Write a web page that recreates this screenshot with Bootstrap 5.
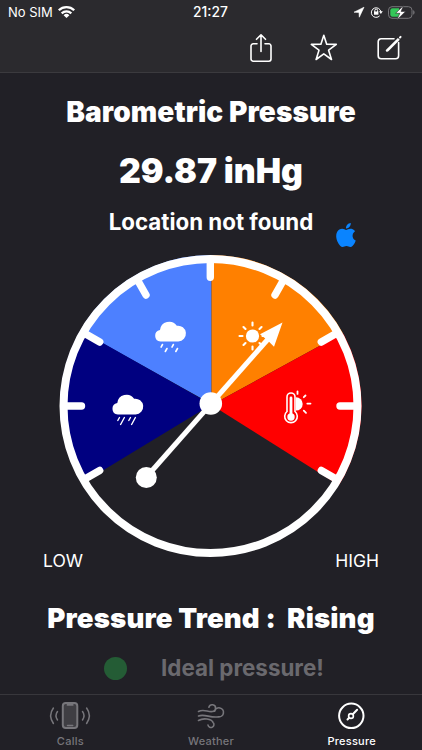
<!DOCTYPE html>
<html lang="en" data-bs-theme="dark">
<head>
<meta charset="utf-8">
<meta name="viewport" content="width=device-width, initial-scale=1">
<title>Barometric Pressure</title>
<link href="https://cdn.jsdelivr.net/npm/bootstrap@5.3.0/dist/css/bootstrap.min.css" rel="stylesheet">
<style>
body{background:#212026;color:#fff;font-family:Inter,"Liberation Sans",sans-serif;height:750px;overflow:hidden}
svg{display:block;flex:none;overflow:visible}
.topbar{height:73px;background:#2b2a2e;border-bottom:1px solid #3b3a3e}
.status{height:24px;padding:0 9px 0 8px;font-size:13px;line-height:24px}
.status>div{flex:1 1 0}
.clock{font-weight:500;font-size:13.8px;text-align:center}
.tools{height:48px;padding-right:20px;gap:35px}
.t{white-space:nowrap;text-align:center;margin:0;font-weight:900}
.t1{font-size:28px;line-height:40px;margin-top:19px;letter-spacing:.1px}
.t2{font-size:33.8px;line-height:44px;margin-top:17px}
.t3{font-size:22.3px;line-height:30px;font-weight:700}
.place{height:36px;margin-top:14px}
.apple{position:absolute;left:334px;top:16px}
.dial{height:310px}
.ends{font-size:17.5px;line-height:24px;padding:0 43px;margin-top:-4px}
.t4{font-size:27.6px;line-height:40px;margin-top:25px;letter-spacing:.13px}
.hint{margin-top:15px;height:30px;padding-left:104px;gap:34px}
.dot{width:23px;height:23px;border-radius:50%;background:#245c35}
.t5{font-size:22.4px;line-height:30px;color:#6a696e;font-weight:700}
.tabs{height:56px;border-top:1px solid #38373c;font-size:11px;font-weight:500;color:#77767b;letter-spacing:.25px}
.tabs a{color:inherit;text-decoration:none;line-height:14px}
.tabs a span{position:relative;top:1px}
.tabs .on{color:#fff}
</style>
</head>
<body class="d-flex flex-column">
<header class="topbar flex-shrink-0">
  <div class="status d-flex align-items-center">
    <div class="d-flex align-items-center"><span>No SIM</span>
      <svg class="ms-1" width="19" height="14" viewBox="0 0 19 14" fill="none" stroke="#fff" stroke-width="2.3"><path d="M1.8 5.3a11 11 0 0 1 15.4 0M4.700 8.300a7 7 0 0 1 9.600 0"/><path d="M9.500 13 6.600 10.200a4.100 4.100 0 0 1 5.800 0z" fill="#fff" stroke="none"/></svg>
    </div>
    <div class="clock">21:27</div>
    <div class="d-flex align-items-center justify-content-end">
      <svg width="62" height="16" viewBox="0 0 62 16" fill="none"><path d="M3 8.200 13 3.200 8.300 13.200 8 8.400z" fill="#fff" stroke="#fff" stroke-width=".6"/><g transform="translate(2 0)"><path d="M26.700 11.800a4.800 4.800 0 1 1 1.200-3.800" stroke="#fff"/><path d="M26 7.300h3.800l-1.900 2.600z" fill="#fff"/><path d="M21 7.500h4.400v3.200H21z" fill="#fff"/><path d="M21.800 8V6.500a1.400 1.400 0 0 1 2.800 0V8" stroke="#fff"/><rect x="35.500" y="2.700" width="23.500" height="11.600" rx="3.500" stroke="#77767a"/><path d="M39.500 4.200H46v8.600h-6.500a2.200 2.200 0 0 1-2.200-2.200V6.400a2.200 2.200 0 0 1 2.200-2.200z" fill="#34c759"/><path d="M60.200 6.300c1.800.5 1.800 3.900 0 4.400z" fill="#77767a"/><path d="M50.500 1.500 42.600 9.300h4.200L43.800 16 52.600 7.400h-4.500z" fill="#fff" stroke="#2b2a2e" stroke-width=".6"/></g></svg>
    </div>
  </div>
  <div class="tools d-flex align-items-center justify-content-end">
    <svg width="28" height="32" viewBox="1 0 28 32" fill="none" stroke="#fff" stroke-width="1.600" stroke-linecap="round" stroke-linejoin="round"><path d="M10 11.800H6.200a2.200 2.200 0 0 0-2.200 2.200v13a2.200 2.200 0 0 0 2.200 2.200h15.600A2.200 2.200 0 0 0 24 27V14a2.200 2.200 0 0 0-2.200-2.200H18M14 19.500V3M9.500 7.300 14 2.800l4.500 4.500"/></svg>
    <svg width="28" height="32" viewBox="1 0 28 32" fill="none" stroke="#fff" stroke-width="1.600" stroke-linejoin="round"><path d="M13.800 3.300 16.700 12.200 26.300 12.400 18.600 18.200 21.500 27.500 13.800 21.900 6.100 27.500 9 18.200 1.300 12.400 10.900 12.200z"/></svg>
    <svg width="28" height="32" viewBox="0 0 28 32" fill="none" stroke="#fff" stroke-width="1.600" stroke-linecap="round"><path d="M20 6.700H7.200A3 3 0 0 0 4.200 9.700v14a3 3 0 0 0 3 3h14.400a3 3 0 0 0 3-3V10.500"/><path d="m13.300 18-1 1 1.500-.6L24.400 7.800l-.5-.5zM26 5.500l.6-.6" stroke-width="2"/></svg>
  </div>
</header>
<main class="flex-grow-1">
  <h1 class="t t1">Barometric Pressure</h1>
  <p class="t t2">29.87 inHg</p>
  <div class="place position-relative"><p class="t t3">Location not found</p>
    <svg class="apple" width="24" height="24" viewBox="0 0 24 24" fill="#0a84ff"><path d="M12.152 6.896c-.948 0-2.415-1.078-3.960-1.040-2.040.027-3.910 1.183-4.961 3.014-2.117 3.675-.546 9.103 1.519 12.090 1.013 1.454 2.208 3.090 3.792 3.039 1.520-.065 2.090-.987 3.935-.987 1.831 0 2.350.987 3.960.948 1.637-.026 2.676-1.480 3.676-2.948 1.156-1.688 1.636-3.325 1.662-3.415-.039-.013-3.182-1.221-3.220-4.857-.026-3.040 2.480-4.494 2.597-4.559-1.429-2.090-3.623-2.324-4.390-2.376-2-.156-3.675 1.090-4.610 1.090zM15.530 3.830c.843-1.012 1.400-2.427 1.245-3.830-1.207.052-2.662.805-3.532 1.818-.780.896-1.454 2.338-1.273 3.714 1.338.104 2.715-.688 3.559-1.701"/></svg>
  </div>
  <svg class="dial" width="422" height="310" viewBox="0 243 422 310">
    <defs><clipPath id="face"><circle cx="210.800" cy="405.700" r="150.800"/></clipPath></defs>
    <g clip-path="url(#face)">
      <path d="M211.500 404 41 309V240H211.500z" fill="#4d80ff"/>
      <path d="M211.500 404.500 41 308V508z" fill="#000080"/>
      <path d="M211.500 405V240H391V307z" fill="#ff8000"/>
      <path d="M211.500 405 391 307V518z" fill="#f00"/>
    </g>
    <circle cx="210.500" cy="406" r="147" fill="none" stroke="#fff" stroke-width="8"/>
    <g stroke="#fff" stroke-width="7.400" stroke-linecap="round"><path d="M210.300 261V277.300M137.500 280l8.500 15M283.500 280l-8.500 15M84 333l15.700 9M337 333l-15.700 9M64 406H81.500M357 406H340M84 479.500l15.700-9M337 479.500l-15.700-9"/></g>
    <g fill="#fff">
      <path d="M160.500 341.500a5.800 5.800 0 0 1-.5-11.500 9.200 9.200 0 0 1 16.800-4.200 7.900 7.900 0 1 1 1.500 15.700z"/>
      <path transform="translate(-42.700 73)" d="M160.500 341.500a5.800 5.800 0 0 1-.5-11.500 9.200 9.200 0 0 1 16.800-4.200 7.900 7.900 0 1 1 1.500 15.700z"/>
      <circle cx="252.500" cy="336" r="6.600"/>
    </g>
    <g stroke="#fff" stroke-width="1.600" stroke-linecap="round" fill="none">
      <path d="M162.500 344.500l-1.400 2.600M173.400 344.500l-1.400 2.600M167 348.500l-1.700 3M177.500 348.500l-1.700 3"/>
      <path stroke-width="1.400" d="M119.500 417.500l-1.700 3M130.500 417.500l-1.700 3M124.400 417.500l-3.800 7M135.400 417.500l-3.800 7"/>
      <path stroke-width="2.100" d="M252.500 322.500v3M252.500 346.500v3M239.500 336h3M262.500 336h3M243.500 327l2 2M259.500 329l2-2M243.500 345l2-2M259.500 343l2 2"/>
      <path stroke-width="1.800" d="M297.500 391.300v2.600M305.500 395.500l-1.700 1.700M307.300 403.600h3.200M303.800 410.700l2.200 2.200M289 395.500l1 1"/>
    </g>
    <path d="M296 397.200a6.700 6.700 0 0 1 0 13.400z" fill="#fff"/>
    <path d="M287 411.500v-14.500a4 4 0 0 1 8 0v14.500a6.300 6.300 0 1 1-8 0z" fill="#f00" stroke="#fff" stroke-width="1.600"/>
    <path d="M291 416v-18" stroke="#fff" stroke-width="2.800" stroke-linecap="round"/><circle cx="291" cy="417" r="3.700" fill="#fff"/>
    <path d="M146 477.500 269 338" stroke="#fff" stroke-width="5"/>
    <path d="M282.500 322.500 274 346.800 267.800 340.500 260 334.200z" fill="#fff"/>
    <circle cx="146.300" cy="477.500" r="10.500" fill="#fff"/><circle cx="210.800" cy="403.500" r="11.300" fill="#fff"/>
  </svg>
  <div class="ends d-flex justify-content-between"><span>LOW</span><span>HIGH</span></div>
  <h2 class="t t4">Pressure Trend :&nbsp; Rising</h2>
  <div class="hint d-flex align-items-center"><span class="dot"></span><span class="t t5">Ideal pressure!</span></div>
</main>
<nav class="tabs d-flex flex-shrink-0">
  <a class="d-flex flex-column align-items-center w-100 pt-1" href="#">
    <svg width="44" height="34" viewBox="0 0 44 34" fill="none" stroke="#77767b" stroke-width="1.500" stroke-linecap="round"><rect x="14.800" y="4" width="14.500" height="25" rx="3" fill="#3f3e43" stroke-width="2"/><path d="M19.500 5h5.200v1h-5.200zM19.500 26.500h5.200"/><path d="M9.500 12.500q-3 4 0 8.500M5.400 9q-5.500 7.500 0 15.500M34.500 12.500q3 4 0 8.500M38.600 9q5.500 7.500 0 15.500"/></svg>
    <span>Calls</span></a>
  <a class="d-flex flex-column align-items-center w-100 pt-1" href="#">
    <svg width="30" height="34" viewBox="0 0 30 34" fill="none" stroke="#77767b" stroke-width="1.600" stroke-linecap="round"><path d="M2.500 12.500C8 9.500 12 13.500 16.500 12.500a3.400 3.400 0 1 0-3.600-4.300M2.500 17c6-2.500 12 2.300 20 .8a4.500 4.500 0 1 0-3.900-5.600M2.500 21.500c5-3 13-1.500 14.500 1.800a3 3 0 1 1-5 2.800"/></svg>
    <span>Weather</span></a>
  <a class="on d-flex flex-column align-items-center w-100 pt-1" href="#">
    <svg width="30" height="34" viewBox="0 0 30 34" fill="none" stroke="#fff"><circle cx="14.300" cy="16.800" r="12.200" stroke-width="2"/><circle cx="14" cy="17" r="2.400" stroke-width="1.600"/><path d="m15.800 15.200 4.300-4.500M12.200 18.700l-1.700 1.800" stroke-width="2" stroke-linecap="round"/></svg>
    <span>Pressure</span></a>
</nav>
<script src="https://cdn.jsdelivr.net/npm/bootstrap@5.3.0/dist/js/bootstrap.bundle.min.js"></script>
</body>
</html>
